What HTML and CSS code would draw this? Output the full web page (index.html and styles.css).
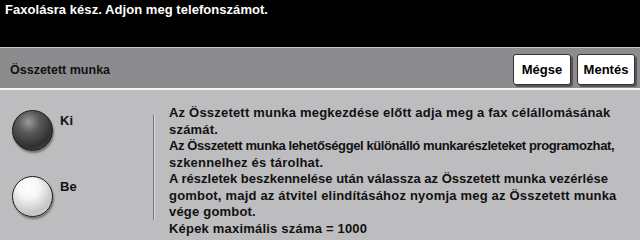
FILE: index.html
```html
<!DOCTYPE html>
<html lang="hu">
<head>
    <meta charset="UTF-8">
    <title>Összetett munka</title>
    <link rel="stylesheet" href="styles.css">
</head>
<body>
    <div class="status">Faxolásra kész. Adjon meg telefonszámot.</div>

    <div class="titlebar">
        <div class="title">Összetett munka</div>
        <div class="actions">
            <button class="btn">Mégse</button>
            <button class="btn">Mentés</button>
        </div>
    </div>

    <div class="content">
        <div class="options">
            <div class="option">
                <span class="radio radio-dark"></span>
                <span class="label">Ki</span>
            </div>
            <div class="option">
                <span class="radio radio-light"></span>
                <span class="label">Be</span>
            </div>
        </div>
        <div class="divider"></div>
        <div class="info">
            Az Összetett munka megkezdése előtt adja meg a fax célállomásának<br>
            számát.<br>
            <span class="tighter">Az Összetett munka lehetőséggel különálló munkarészleteket programozhat,</span><br>
            szkennelhez és tárolhat.<br>
            <span class="tight">A részletek beszkennelése után válassza az Összetett munka vezérlése</span><br>
            gombot, majd az átvitel elindításához nyomja meg az Összetett munka<br>
            vége gombot.<br>
            Képek maximális száma = 1000
        </div>
    </div>
</body>
</html>
```

FILE: styles.css
```css
body {
    margin: 0;
    width: 640px;
    height: 240px;
    overflow: hidden;
    font-family: "Liberation Sans", Arial, sans-serif;
    font-weight: bold;
    font-size: 13px;
    background: #bdbdbf;
}

.status {
    height: 48px;
    background: #000;
    color: #fff;
    padding: 2px 0 0 5px;
    box-sizing: border-box;
    letter-spacing: 0.05px;
    border-bottom: 1px solid #c4c4c6;
}

.titlebar {
    height: 40px;
    background: #8c8c8e;
    border-bottom: 2px solid #f4f4f4;
    display: flex;
    align-items: center;
    justify-content: space-between;
    padding: 0 5px 0 10px;
}

.title {
    color: #111;
    font-size: 12.5px;
    padding-top: 4px;
}

.actions {
    display: flex;
    gap: 6px;
    padding-top: 2px;
}

.btn {
    width: 58px;
    height: 31px;
    background: #fff;
    border: 1px solid #333;
    border-radius: 3px;
    box-shadow: 2px 2px 0 #555;
    font-family: "Liberation Sans", Arial, sans-serif;
    font-weight: bold;
    font-size: 13px;
    color: #000;
    padding: 0;
}

.content {
    display: flex;
    padding-top: 20px;
}

.options {
    width: 153px;
    flex-shrink: 0;
    padding-left: 12px;
    box-sizing: border-box;
    display: flex;
    flex-direction: column;
    gap: 25px;
}

.option {
    display: flex;
    align-items: flex-start;
    gap: 7px;
}

.label {
    color: #111;
    padding-top: 3px;
}

.radio {
    width: 39px;
    height: 39px;
    border-radius: 50%;
    border: 1px solid #1a1a1a;
    box-shadow: 1px 2px 2px rgba(0, 0, 0, 0.4);
}

.radio-dark {
    background: radial-gradient(circle at 40% 28%, #9a9a9a 0, #5a5a5a 30%, #303030 68%, #5a5a5a 100%);
}

.radio-light {
    background: radial-gradient(circle at 40% 28%, #fff 0, #f6f6f6 28%, #c4c4c4 70%, #ececec 100%);
}

.divider {
    width: 1px;
    height: 105px;
    flex-shrink: 0;
    margin-top: 5px;
    background: #7a7a7c;
    border-right: 1px solid #d8d8da;
}

.info {
    padding-left: 14px;
    color: #111;
    line-height: 16.5px;
    letter-spacing: 0.2px;
    white-space: nowrap;
    margin-top: -5px;
}

.info .tight {
    letter-spacing: 0;
}

.info .tighter {
    letter-spacing: -0.4px;
}
```
